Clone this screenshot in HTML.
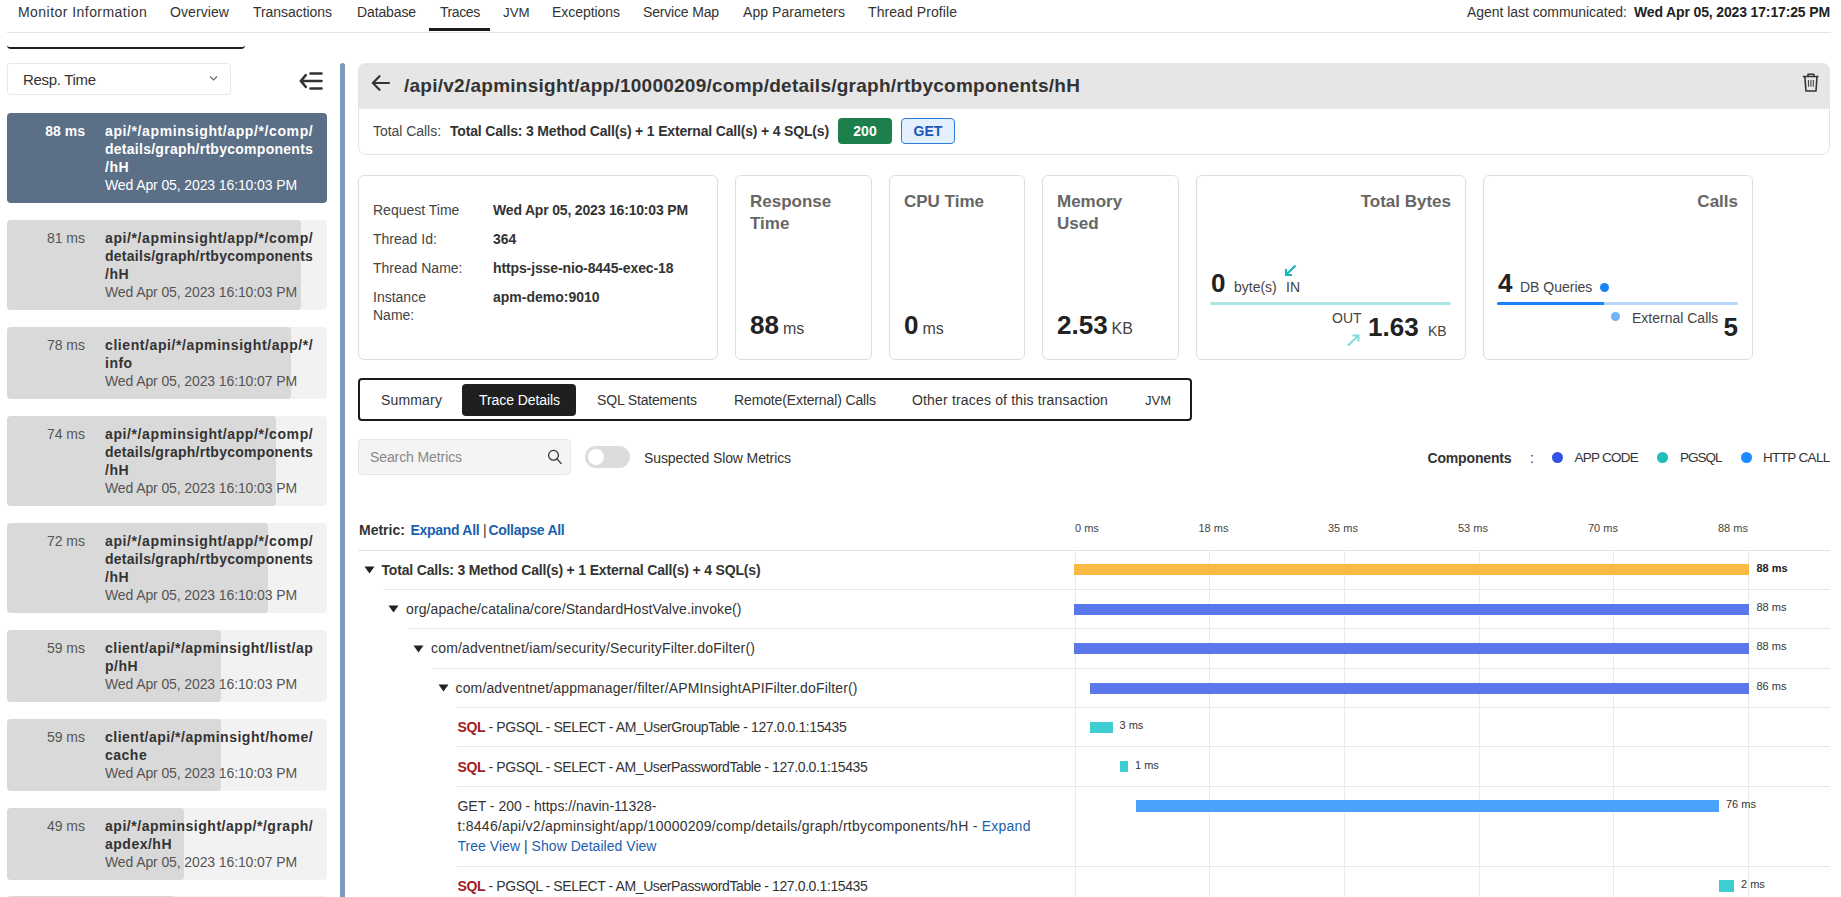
<!DOCTYPE html><html><head><meta charset="utf-8"><style>
html,body{margin:0;padding:0;width:1841px;height:897px;overflow:hidden;background:#fff;font-family:"Liberation Sans",sans-serif;position:relative}
div{box-sizing:border-box}
</style></head><body>
<div style="position:absolute;left:18px;top:3.15px;font-size:14px;line-height:18px;font-weight:400;color:#333;letter-spacing:0.454px;white-space:nowrap;">Monitor Information</div>
<div style="position:absolute;left:170px;top:3.15px;font-size:14px;line-height:18px;font-weight:400;color:#333;letter-spacing:0.085px;white-space:nowrap;">Overview</div>
<div style="position:absolute;left:253px;top:3.15px;font-size:14px;line-height:18px;font-weight:400;color:#333;letter-spacing:-0.054px;white-space:nowrap;">Transactions</div>
<div style="position:absolute;left:357px;top:3.15px;font-size:14px;line-height:18px;font-weight:400;color:#333;letter-spacing:-0.125px;white-space:nowrap;">Database</div>
<div style="position:absolute;left:440px;top:3.15px;font-size:14px;line-height:18px;font-weight:400;color:#333;letter-spacing:-0.415px;white-space:nowrap;">Traces</div>
<div style="position:absolute;left:503px;top:3.89px;font-size:13.3px;line-height:17px;font-weight:400;color:#333;letter-spacing:0.000px;white-space:nowrap;">JVM</div>
<div style="position:absolute;left:552px;top:3.15px;font-size:14px;line-height:18px;font-weight:400;color:#333;letter-spacing:-0.051px;white-space:nowrap;">Exceptions</div>
<div style="position:absolute;left:643px;top:3.15px;font-size:14px;line-height:18px;font-weight:400;color:#333;letter-spacing:-0.173px;white-space:nowrap;">Service Map</div>
<div style="position:absolute;left:743px;top:3.15px;font-size:14px;line-height:18px;font-weight:400;color:#333;letter-spacing:0.061px;white-space:nowrap;">App Parameters</div>
<div style="position:absolute;left:868px;top:3.15px;font-size:14px;line-height:18px;font-weight:400;color:#333;letter-spacing:0.079px;white-space:nowrap;">Thread Profile</div>
<div style="position:absolute;left:429px;top:28px;width:61px;height:3px;background:#1a1a1a;border-radius:0;"></div>
<div style="position:absolute;left:7px;top:32px;width:1824px;height:1px;background:#e2e2e2;border-radius:0;"></div>
<div style="position:absolute;left:1467px;top:3.15px;font-size:14px;line-height:18px;font-weight:400;color:#333;letter-spacing:-0.047px;white-space:nowrap;">Agent last communicated:</div>
<div style="position:absolute;left:1634px;top:3.15px;font-size:14px;line-height:18px;font-weight:700;color:#222;letter-spacing:-0.145px;white-space:nowrap;">Wed Apr 05, 2023 17:17:25 PM</div>
<div style="position:absolute;left:7px;top:38px;width:238px;height:11px;background:transparent;border:0 solid #1f1f1f;border-radius:0 0 4px 4px;border-bottom-width:2.5px;"></div>
<div style="position:absolute;left:7px;top:63px;width:224px;height:32px;background:#fff;border:1px solid #e9e9e9;border-radius:3px;"></div>
<div style="position:absolute;left:23px;top:69.80px;font-size:15px;line-height:20px;font-weight:400;color:#333;letter-spacing:-0.301px;white-space:nowrap;">Resp. Time</div>
<svg style="position:absolute;left:209px;top:75px" width="9" height="7" viewBox="0 0 9 7"><path d="M1 1.5 L4.5 5 L8 1.5" fill="none" stroke="#666" stroke-width="1.2"/></svg>
<svg style="position:absolute;left:297px;top:70px" width="28" height="22" viewBox="0 0 28 22"><path d="M8.8 5.2 L3.8 11 L8.8 16.8 M3.8 11 H24.5 M13.5 3.5 H24.5 M13.5 18.5 H24.5" fill="none" stroke="#333" stroke-width="2.6" stroke-linecap="round" stroke-linejoin="round"/></svg>
<div style="position:absolute;left:340px;top:63px;width:5px;height:834px;background:#7b9bb9;border-radius:3px 3px 0 0;"></div>
<div style="position:absolute;left:7px;top:113px;width:320px;height:90px;background:#5b6f87;border-radius:4px;"></div>
<div style="position:absolute;right:1756px;text-align:right;top:122.15px;font-size:14px;line-height:18px;font-weight:700;color:#fff;letter-spacing:0.000px;white-space:nowrap;">88 ms</div>
<div style="position:absolute;left:105px;top:122.15px;font-size:14px;line-height:18px;font-weight:700;color:#fff;letter-spacing:0.605px;white-space:nowrap;">api/*/apminsight/app/*/comp/</div>
<div style="position:absolute;left:105px;top:140.15px;font-size:14px;line-height:18px;font-weight:700;color:#fff;letter-spacing:0.265px;white-space:nowrap;">details/graph/rtbycomponents</div>
<div style="position:absolute;left:105px;top:158.15px;font-size:14px;line-height:18px;font-weight:700;color:#fff;letter-spacing:0.500px;white-space:nowrap;">/hH</div>
<div style="position:absolute;left:105px;top:176.15px;font-size:14px;line-height:18px;font-weight:400;color:#fff;letter-spacing:-0.113px;white-space:nowrap;">Wed Apr 05, 2023 16:10:03 PM</div>
<div style="position:absolute;left:7px;top:220px;width:320px;height:90px;background:#f2f2f2;border-radius:4px;"></div>
<div style="position:absolute;left:7px;top:220px;width:294px;height:90px;background:#d9d9d9;border-radius:4px;"></div>
<div style="position:absolute;right:1756px;text-align:right;top:229.15px;font-size:14px;line-height:18px;font-weight:400;color:#555;letter-spacing:0.000px;white-space:nowrap;">81 ms</div>
<div style="position:absolute;left:105px;top:229.15px;font-size:14px;line-height:18px;font-weight:700;color:#333;letter-spacing:0.605px;white-space:nowrap;">api/*/apminsight/app/*/comp/</div>
<div style="position:absolute;left:105px;top:247.15px;font-size:14px;line-height:18px;font-weight:700;color:#333;letter-spacing:0.265px;white-space:nowrap;">details/graph/rtbycomponents</div>
<div style="position:absolute;left:105px;top:265.15px;font-size:14px;line-height:18px;font-weight:700;color:#333;letter-spacing:0.500px;white-space:nowrap;">/hH</div>
<div style="position:absolute;left:105px;top:283.15px;font-size:14px;line-height:18px;font-weight:400;color:#555;letter-spacing:-0.113px;white-space:nowrap;">Wed Apr 05, 2023 16:10:03 PM</div>
<div style="position:absolute;left:7px;top:327px;width:320px;height:72px;background:#f2f2f2;border-radius:4px;"></div>
<div style="position:absolute;left:7px;top:327px;width:284px;height:72px;background:#d9d9d9;border-radius:4px;"></div>
<div style="position:absolute;right:1756px;text-align:right;top:336.15px;font-size:14px;line-height:18px;font-weight:400;color:#555;letter-spacing:0.000px;white-space:nowrap;">78 ms</div>
<div style="position:absolute;left:105px;top:336.15px;font-size:14px;line-height:18px;font-weight:700;color:#333;letter-spacing:0.590px;white-space:nowrap;">client/api/*/apminsight/app/*/</div>
<div style="position:absolute;left:105px;top:354.15px;font-size:14px;line-height:18px;font-weight:700;color:#333;letter-spacing:0.500px;white-space:nowrap;">info</div>
<div style="position:absolute;left:105px;top:372.15px;font-size:14px;line-height:18px;font-weight:400;color:#555;letter-spacing:-0.113px;white-space:nowrap;">Wed Apr 05, 2023 16:10:07 PM</div>
<div style="position:absolute;left:7px;top:416px;width:320px;height:90px;background:#f2f2f2;border-radius:4px;"></div>
<div style="position:absolute;left:7px;top:416px;width:269px;height:90px;background:#d9d9d9;border-radius:4px;"></div>
<div style="position:absolute;right:1756px;text-align:right;top:425.15px;font-size:14px;line-height:18px;font-weight:400;color:#555;letter-spacing:0.000px;white-space:nowrap;">74 ms</div>
<div style="position:absolute;left:105px;top:425.15px;font-size:14px;line-height:18px;font-weight:700;color:#333;letter-spacing:0.605px;white-space:nowrap;">api/*/apminsight/app/*/comp/</div>
<div style="position:absolute;left:105px;top:443.15px;font-size:14px;line-height:18px;font-weight:700;color:#333;letter-spacing:0.265px;white-space:nowrap;">details/graph/rtbycomponents</div>
<div style="position:absolute;left:105px;top:461.15px;font-size:14px;line-height:18px;font-weight:700;color:#333;letter-spacing:0.500px;white-space:nowrap;">/hH</div>
<div style="position:absolute;left:105px;top:479.15px;font-size:14px;line-height:18px;font-weight:400;color:#555;letter-spacing:-0.113px;white-space:nowrap;">Wed Apr 05, 2023 16:10:03 PM</div>
<div style="position:absolute;left:7px;top:523px;width:320px;height:90px;background:#f2f2f2;border-radius:4px;"></div>
<div style="position:absolute;left:7px;top:523px;width:261px;height:90px;background:#d9d9d9;border-radius:4px;"></div>
<div style="position:absolute;right:1756px;text-align:right;top:532.15px;font-size:14px;line-height:18px;font-weight:400;color:#555;letter-spacing:0.000px;white-space:nowrap;">72 ms</div>
<div style="position:absolute;left:105px;top:532.15px;font-size:14px;line-height:18px;font-weight:700;color:#333;letter-spacing:0.605px;white-space:nowrap;">api/*/apminsight/app/*/comp/</div>
<div style="position:absolute;left:105px;top:550.15px;font-size:14px;line-height:18px;font-weight:700;color:#333;letter-spacing:0.265px;white-space:nowrap;">details/graph/rtbycomponents</div>
<div style="position:absolute;left:105px;top:568.15px;font-size:14px;line-height:18px;font-weight:700;color:#333;letter-spacing:0.500px;white-space:nowrap;">/hH</div>
<div style="position:absolute;left:105px;top:586.15px;font-size:14px;line-height:18px;font-weight:400;color:#555;letter-spacing:-0.113px;white-space:nowrap;">Wed Apr 05, 2023 16:10:03 PM</div>
<div style="position:absolute;left:7px;top:630px;width:320px;height:72px;background:#f2f2f2;border-radius:4px;"></div>
<div style="position:absolute;left:7px;top:630px;width:214px;height:72px;background:#d9d9d9;border-radius:4px;"></div>
<div style="position:absolute;right:1756px;text-align:right;top:639.15px;font-size:14px;line-height:18px;font-weight:400;color:#555;letter-spacing:0.000px;white-space:nowrap;">59 ms</div>
<div style="position:absolute;left:105px;top:639.15px;font-size:14px;line-height:18px;font-weight:700;color:#333;letter-spacing:0.494px;white-space:nowrap;">client/api/*/apminsight/list/ap</div>
<div style="position:absolute;left:105px;top:657.15px;font-size:14px;line-height:18px;font-weight:700;color:#333;letter-spacing:0.500px;white-space:nowrap;">p/hH</div>
<div style="position:absolute;left:105px;top:675.15px;font-size:14px;line-height:18px;font-weight:400;color:#555;letter-spacing:-0.113px;white-space:nowrap;">Wed Apr 05, 2023 16:10:03 PM</div>
<div style="position:absolute;left:7px;top:719px;width:320px;height:72px;background:#f2f2f2;border-radius:4px;"></div>
<div style="position:absolute;left:7px;top:719px;width:214px;height:72px;background:#d9d9d9;border-radius:4px;"></div>
<div style="position:absolute;right:1756px;text-align:right;top:728.15px;font-size:14px;line-height:18px;font-weight:400;color:#555;letter-spacing:0.000px;white-space:nowrap;">59 ms</div>
<div style="position:absolute;left:105px;top:728.15px;font-size:14px;line-height:18px;font-weight:700;color:#333;letter-spacing:0.502px;white-space:nowrap;">client/api/*/apminsight/home/</div>
<div style="position:absolute;left:105px;top:746.15px;font-size:14px;line-height:18px;font-weight:700;color:#333;letter-spacing:0.500px;white-space:nowrap;">cache</div>
<div style="position:absolute;left:105px;top:764.15px;font-size:14px;line-height:18px;font-weight:400;color:#555;letter-spacing:-0.113px;white-space:nowrap;">Wed Apr 05, 2023 16:10:03 PM</div>
<div style="position:absolute;left:7px;top:808px;width:320px;height:72px;background:#f2f2f2;border-radius:4px;"></div>
<div style="position:absolute;left:7px;top:808px;width:177px;height:72px;background:#d9d9d9;border-radius:4px;"></div>
<div style="position:absolute;right:1756px;text-align:right;top:817.15px;font-size:14px;line-height:18px;font-weight:400;color:#555;letter-spacing:0.000px;white-space:nowrap;">49 ms</div>
<div style="position:absolute;left:105px;top:817.15px;font-size:14px;line-height:18px;font-weight:700;color:#333;letter-spacing:0.529px;white-space:nowrap;">api/*/apminsight/app/*/graph/</div>
<div style="position:absolute;left:105px;top:835.15px;font-size:14px;line-height:18px;font-weight:700;color:#333;letter-spacing:0.500px;white-space:nowrap;">apdex/hH</div>
<div style="position:absolute;left:105px;top:853.15px;font-size:14px;line-height:18px;font-weight:400;color:#555;letter-spacing:-0.113px;white-space:nowrap;">Wed Apr 05, 2023 16:10:07 PM</div>
<div style="position:absolute;left:7px;top:896px;width:320px;height:91px;background:#f2f2f2;border-radius:4px;"></div>
<div style="position:absolute;left:7px;top:896px;width:169px;height:91px;background:#d9d9d9;border-radius:4px;"></div>
<div style="position:absolute;right:1756px;text-align:right;top:905.15px;font-size:14px;line-height:18px;font-weight:400;color:#555;letter-spacing:0.000px;white-space:nowrap;">48 ms</div>
<div style="position:absolute;left:105px;top:905.15px;font-size:14px;line-height:18px;font-weight:700;color:#333;letter-spacing:0.500px;white-space:nowrap;">api/*/apminsight/app/*/comp/</div>
<div style="position:absolute;left:358px;top:63px;width:1472px;height:92px;background:#fff;border:1px solid #e3e3e3;border-radius:8px;"></div>
<div style="position:absolute;left:358px;top:63px;width:1472px;height:46px;background:#e6e6e6;border-radius:8px 8px 0 0;"></div>
<svg style="position:absolute;left:370px;top:73px" width="22" height="20" viewBox="0 0 22 20"><path d="M9.5 3.2 L2.8 10 L9.5 16.8 M2.8 10 H19" fill="none" stroke="#333" stroke-width="2.2" stroke-linecap="round" stroke-linejoin="round"/></svg>
<div style="position:absolute;left:404px;top:72.92px;font-size:19px;line-height:25px;font-weight:700;color:#333;letter-spacing:0.254px;white-space:nowrap;">/api/v2/apminsight/app/10000209/comp/details/graph/rtbycomponents/hH</div>
<svg style="position:absolute;left:1801px;top:72px" width="19" height="21" viewBox="0 0 19 21"><path d="M1.8 4.5 H17.5 M7 4.5 V2.3 H12.8 V4.5 M3.8 4.5 L5 19 H15 L16 4.5" fill="none" stroke="#333" stroke-width="1.6" stroke-linejoin="round"/><path d="M7.4 8 L7.6 14.8 M9.9 8 V14.8 M12.4 8 L12.2 14.8" fill="none" stroke="#444" stroke-width="1.1" stroke-linejoin="round"/></svg>
<div style="position:absolute;left:373px;top:122.15px;font-size:14px;line-height:18px;font-weight:400;color:#444;letter-spacing:-0.041px;white-space:nowrap;">Total Calls:</div>
<div style="position:absolute;left:450px;top:122.15px;font-size:14px;line-height:18px;font-weight:700;color:#333;letter-spacing:-0.174px;white-space:nowrap;">Total Calls: 3 Method Call(s) + 1 External Call(s) + 4 SQL(s)</div>
<div style="position:absolute;left:838px;top:118px;width:54px;height:26px;background:#1d7f4b;border-radius:4px;"></div>
<div style="position:absolute;left:715px;width:300px;text-align:center;top:122.15px;font-size:14px;line-height:18px;font-weight:700;color:#fff;letter-spacing:0.000px;white-space:nowrap;">200</div>
<div style="position:absolute;left:901px;top:118px;width:54px;height:26px;background:#e2effd;border:1px solid #2a7de1;border-radius:4px;"></div>
<div style="position:absolute;left:778px;width:300px;text-align:center;top:122.15px;font-size:14px;line-height:18px;font-weight:700;color:#1f55b8;letter-spacing:0.000px;white-space:nowrap;">GET</div>
<div style="position:absolute;left:358px;top:175px;width:360px;height:185px;background:#fff;border:1px solid #dedede;border-radius:6px;"></div>
<div style="position:absolute;left:373px;top:201.15px;font-size:14px;line-height:18px;font-weight:400;color:#444;letter-spacing:0.000px;white-space:nowrap;">Request Time</div>
<div style="position:absolute;left:373px;top:230.15px;font-size:14px;line-height:18px;font-weight:400;color:#444;letter-spacing:0.000px;white-space:nowrap;">Thread Id:</div>
<div style="position:absolute;left:373px;top:259.15px;font-size:14px;line-height:18px;font-weight:400;color:#444;letter-spacing:0.000px;white-space:nowrap;">Thread Name:</div>
<div style="position:absolute;left:373px;top:288.15px;font-size:14px;line-height:18px;font-weight:400;color:#444;letter-spacing:0.000px;white-space:nowrap;">Instance</div>
<div style="position:absolute;left:373px;top:306.15px;font-size:14px;line-height:18px;font-weight:400;color:#444;letter-spacing:0.000px;white-space:nowrap;">Name:</div>
<div style="position:absolute;left:493px;top:201.15px;font-size:14px;line-height:18px;font-weight:700;color:#333;letter-spacing:-0.182px;white-space:nowrap;">Wed Apr 05, 2023 16:10:03 PM</div>
<div style="position:absolute;left:493px;top:230.15px;font-size:14px;line-height:18px;font-weight:700;color:#333;letter-spacing:0.000px;white-space:nowrap;">364</div>
<div style="position:absolute;left:493px;top:259.15px;font-size:14px;line-height:18px;font-weight:700;color:#333;letter-spacing:-0.119px;white-space:nowrap;">https-jsse-nio-8445-exec-18</div>
<div style="position:absolute;left:493px;top:288.15px;font-size:14px;line-height:18px;font-weight:700;color:#333;letter-spacing:0.000px;white-space:nowrap;">apm-demo:9010</div>
<div style="position:absolute;left:735px;top:175px;width:137px;height:185px;background:#fff;border:1px solid #dedede;border-radius:6px;"></div>
<div style="position:absolute;left:750px;top:190.61px;font-size:17px;line-height:22px;font-weight:700;color:#666;letter-spacing:0.000px;white-space:nowrap;">Response</div>
<div style="position:absolute;left:750px;top:213.11px;font-size:17px;line-height:22px;font-weight:700;color:#666;letter-spacing:0.000px;white-space:nowrap;">Time</div>
<div style="position:absolute;left:750px;top:307.99px;font-size:26px;line-height:34px;font-weight:700;color:#222;letter-spacing:0.000px;white-space:nowrap;">88<span style="font-size:16px;font-weight:400;color:#444;margin-left:4px">ms</span></div>
<div style="position:absolute;left:889px;top:175px;width:136px;height:185px;background:#fff;border:1px solid #dedede;border-radius:6px;"></div>
<div style="position:absolute;left:904px;top:190.61px;font-size:17px;line-height:22px;font-weight:700;color:#666;letter-spacing:0.000px;white-space:nowrap;">CPU Time</div>
<div style="position:absolute;left:904px;top:307.99px;font-size:26px;line-height:34px;font-weight:700;color:#222;letter-spacing:0.000px;white-space:nowrap;">0<span style="font-size:16px;font-weight:400;color:#444;margin-left:4px">ms</span></div>
<div style="position:absolute;left:1042px;top:175px;width:137px;height:185px;background:#fff;border:1px solid #dedede;border-radius:6px;"></div>
<div style="position:absolute;left:1057px;top:190.61px;font-size:17px;line-height:22px;font-weight:700;color:#666;letter-spacing:0.000px;white-space:nowrap;">Memory</div>
<div style="position:absolute;left:1057px;top:213.11px;font-size:17px;line-height:22px;font-weight:700;color:#666;letter-spacing:0.000px;white-space:nowrap;">Used</div>
<div style="position:absolute;left:1057px;top:307.99px;font-size:26px;line-height:34px;font-weight:700;color:#222;letter-spacing:0.000px;white-space:nowrap;">2.53<span style="font-size:16px;font-weight:400;color:#444;margin-left:4px">KB</span></div>
<div style="position:absolute;left:1196px;top:175px;width:270px;height:185px;background:#fff;border:1px solid #dedede;border-radius:6px;"></div>
<div style="position:absolute;right:390px;text-align:right;top:190.61px;font-size:17px;line-height:22px;font-weight:700;color:#666;letter-spacing:0.000px;white-space:nowrap;">Total Bytes</div>
<div style="position:absolute;left:1211px;top:265.99px;font-size:26px;line-height:34px;font-weight:700;color:#222;letter-spacing:0.000px;white-space:nowrap;">0</div>
<div style="position:absolute;left:1234px;top:278.15px;font-size:14px;line-height:18px;font-weight:400;color:#444;letter-spacing:0.000px;white-space:nowrap;">byte(s)</div>
<div style="position:absolute;left:1286px;top:278.15px;font-size:14px;line-height:18px;font-weight:400;color:#444;letter-spacing:0.000px;white-space:nowrap;">IN</div>
<svg style="position:absolute;left:1283px;top:263px" width="15" height="15" viewBox="0 0 15 15"><path d="M12.5 2.5 L3 12 M3 6 V12 H9" fill="none" stroke="#1bb3b3" stroke-width="2.2"/></svg>
<div style="position:absolute;left:1210px;top:302px;width:241px;height:3px;background:#ace5e5;border-radius:2px;"></div>
<div style="position:absolute;left:1332px;top:309.15px;font-size:14px;line-height:18px;font-weight:400;color:#444;letter-spacing:0.000px;white-space:nowrap;">OUT</div>
<div style="position:absolute;left:1368px;top:310.49px;font-size:26px;line-height:34px;font-weight:700;color:#222;letter-spacing:0.000px;white-space:nowrap;">1.63</div>
<div style="position:absolute;left:1428px;top:322.15px;font-size:14px;line-height:18px;font-weight:400;color:#444;letter-spacing:0.000px;white-space:nowrap;">KB</div>
<svg style="position:absolute;left:1346px;top:333px" width="16" height="14" viewBox="0 0 16 14"><path d="M2 12.5 L12.5 2.5 M6.5 2.5 H12.5 V8.5" fill="none" stroke="#7fdcdc" stroke-width="2"/></svg>
<div style="position:absolute;left:1483px;top:175px;width:270px;height:185px;background:#fff;border:1px solid #dedede;border-radius:6px;"></div>
<div style="position:absolute;right:103px;text-align:right;top:190.61px;font-size:17px;line-height:22px;font-weight:700;color:#666;letter-spacing:0.000px;white-space:nowrap;">Calls</div>
<div style="position:absolute;left:1498px;top:265.99px;font-size:26px;line-height:34px;font-weight:700;color:#222;letter-spacing:0.000px;white-space:nowrap;">4</div>
<div style="position:absolute;left:1520px;top:278.15px;font-size:14px;line-height:18px;font-weight:400;color:#444;letter-spacing:0.000px;white-space:nowrap;">DB Queries</div>
<div style="position:absolute;left:1599.5px;top:282.5px;width:9.5px;height:9.5px;background:#1a82f7;border-radius:50%;"></div>
<div style="position:absolute;left:1497px;top:302px;width:241px;height:3px;background:#b7d7fb;border-radius:2px;"></div>
<div style="position:absolute;left:1497px;top:302px;width:107px;height:3px;background:#1a82f7;border-radius:2px 0 0 2px;"></div>
<div style="position:absolute;left:1610.5px;top:311.5px;width:9.5px;height:9.5px;background:#6cb3fa;border-radius:50%;"></div>
<div style="position:absolute;left:1632px;top:309.15px;font-size:14px;line-height:18px;font-weight:400;color:#444;letter-spacing:0.000px;white-space:nowrap;">External Calls</div>
<div style="position:absolute;right:103px;text-align:right;top:309.99px;font-size:26px;line-height:34px;font-weight:700;color:#222;letter-spacing:0.000px;white-space:nowrap;">5</div>
<div style="position:absolute;left:358px;top:378px;width:834px;height:43px;background:#fff;border:2px solid #1a1a1a;border-radius:4px;"></div>
<div style="position:absolute;left:462px;top:384px;width:114px;height:32px;background:#1f1f1f;border-radius:4px;"></div>
<div style="position:absolute;left:381px;top:391.15px;font-size:14px;line-height:18px;font-weight:400;color:#333;letter-spacing:0.168px;white-space:nowrap;">Summary</div>
<div style="position:absolute;left:479px;top:391.15px;font-size:14px;line-height:18px;font-weight:400;color:#fff;letter-spacing:-0.076px;white-space:nowrap;">Trace Details</div>
<div style="position:absolute;left:597px;top:391.15px;font-size:14px;line-height:18px;font-weight:400;color:#333;letter-spacing:-0.163px;white-space:nowrap;">SQL Statements</div>
<div style="position:absolute;left:734px;top:391.15px;font-size:14px;line-height:18px;font-weight:400;color:#333;letter-spacing:-0.126px;white-space:nowrap;">Remote(External) Calls</div>
<div style="position:absolute;left:912px;top:391.15px;font-size:14px;line-height:18px;font-weight:400;color:#333;letter-spacing:0.170px;white-space:nowrap;">Other traces of this transaction</div>
<div style="position:absolute;left:1145px;top:392.00px;font-size:13px;line-height:17px;font-weight:400;color:#333;letter-spacing:0.000px;white-space:nowrap;">JVM</div>
<div style="position:absolute;left:358px;top:439px;width:213px;height:36px;background:#f4f4f4;border:1px solid #e6e6e6;border-radius:4px;"></div>
<div style="position:absolute;left:370px;top:448.15px;font-size:14px;line-height:18px;font-weight:400;color:#888;letter-spacing:-0.101px;white-space:nowrap;">Search Metrics</div>
<svg style="position:absolute;left:546px;top:449px" width="17" height="17" viewBox="0 0 17 17"><circle cx="7.5" cy="6.3" r="4.9" fill="none" stroke="#333" stroke-width="1.3"/><path d="M11 9.9 L15 14.4" stroke="#333" stroke-width="1.4" stroke-linecap="round"/></svg>
<div style="position:absolute;left:585px;top:446px;width:45px;height:22px;background:#dcdcdc;border-radius:11px;"></div>
<div style="position:absolute;left:588px;top:449px;width:16px;height:16px;background:#fff;border-radius:50%;"></div>
<div style="position:absolute;left:644px;top:449.15px;font-size:14px;line-height:18px;font-weight:400;color:#333;letter-spacing:-0.112px;white-space:nowrap;">Suspected Slow Metrics</div>
<div style="position:absolute;left:1427.5px;top:448.65px;font-size:14px;line-height:18px;font-weight:700;color:#333;letter-spacing:-0.164px;white-space:nowrap;">Components</div>
<div style="position:absolute;left:1530px;top:448.65px;font-size:14px;line-height:18px;font-weight:400;color:#333;letter-spacing:0.000px;white-space:nowrap;">:</div>
<div style="position:absolute;left:1552px;top:452px;width:11px;height:11px;background:#3253e6;border-radius:50%;"></div>
<div style="position:absolute;left:1574.5px;top:448.82px;font-size:13.5px;line-height:18px;font-weight:400;color:#333;letter-spacing:-0.738px;white-space:nowrap;">APP CODE</div>
<div style="position:absolute;left:1657px;top:452px;width:11px;height:11px;background:#1dbfb8;border-radius:50%;"></div>
<div style="position:absolute;left:1680px;top:448.82px;font-size:13.5px;line-height:18px;font-weight:400;color:#333;letter-spacing:-1.007px;white-space:nowrap;">PGSQL</div>
<div style="position:absolute;left:1740.5px;top:452px;width:11.0px;height:11px;background:#1a8cff;border-radius:50%;"></div>
<div style="position:absolute;left:1763px;top:448.82px;font-size:13.5px;line-height:18px;font-weight:400;color:#333;letter-spacing:-0.651px;white-space:nowrap;">HTTP CALL</div>
<div style="position:absolute;left:359px;top:521.15px;font-size:14px;line-height:18px;font-weight:700;color:#333;letter-spacing:0.000px;white-space:nowrap;">Metric: </div>
<div style="position:absolute;left:410.5px;top:521.15px;font-size:14px;line-height:18px;font-weight:700;color:#1b5fae;letter-spacing:-0.298px;white-space:nowrap;">Expand All</div>
<div style="position:absolute;left:483px;top:521.15px;font-size:14px;line-height:18px;font-weight:400;color:#333;letter-spacing:0.000px;white-space:nowrap;">|</div>
<div style="position:absolute;left:488.5px;top:521.15px;font-size:14px;line-height:18px;font-weight:700;color:#1b5fae;letter-spacing:-0.315px;white-space:nowrap;">Collapse All</div>
<div style="position:absolute;left:1075px;top:521.19px;font-size:11px;line-height:14px;font-weight:400;color:#444;letter-spacing:0.000px;white-space:nowrap;">0 ms</div>
<div style="position:absolute;left:1198.5px;top:521.19px;font-size:11px;line-height:14px;font-weight:400;color:#444;letter-spacing:0.000px;white-space:nowrap;">18 ms</div>
<div style="position:absolute;left:1328px;top:521.19px;font-size:11px;line-height:14px;font-weight:400;color:#444;letter-spacing:0.000px;white-space:nowrap;">35 ms</div>
<div style="position:absolute;left:1458px;top:521.19px;font-size:11px;line-height:14px;font-weight:400;color:#444;letter-spacing:0.000px;white-space:nowrap;">53 ms</div>
<div style="position:absolute;left:1588px;top:521.19px;font-size:11px;line-height:14px;font-weight:400;color:#444;letter-spacing:0.000px;white-space:nowrap;">70 ms</div>
<div style="position:absolute;left:1718px;top:521.19px;font-size:11px;line-height:14px;font-weight:400;color:#444;letter-spacing:0.000px;white-space:nowrap;">88 ms</div>
<div style="position:absolute;left:1075px;top:551px;width:1px;height:346px;background:#ebebeb;border-radius:0;"></div>
<div style="position:absolute;left:1209px;top:551px;width:1px;height:346px;background:#ebebeb;border-radius:0;"></div>
<div style="position:absolute;left:1344px;top:551px;width:1px;height:346px;background:#ebebeb;border-radius:0;"></div>
<div style="position:absolute;left:1479px;top:551px;width:1px;height:346px;background:#ebebeb;border-radius:0;"></div>
<div style="position:absolute;left:1613px;top:551px;width:1px;height:346px;background:#ebebeb;border-radius:0;"></div>
<div style="position:absolute;left:1748px;top:551px;width:1px;height:346px;background:#ebebeb;border-radius:0;"></div>
<div style="position:absolute;left:358px;top:550px;width:1472px;height:1px;background:#e3e3e3;border-radius:0;"></div>
<div style="position:absolute;left:383px;top:589px;width:1447px;height:1px;background:#e6e6e6;border-radius:0;"></div>
<div style="position:absolute;left:408px;top:628px;width:1422px;height:1px;background:#e6e6e6;border-radius:0;"></div>
<div style="position:absolute;left:433px;top:668px;width:1397px;height:1px;background:#e6e6e6;border-radius:0;"></div>
<div style="position:absolute;left:457px;top:707px;width:1373px;height:1px;background:#e6e6e6;border-radius:0;"></div>
<div style="position:absolute;left:457px;top:746px;width:1373px;height:1px;background:#e6e6e6;border-radius:0;"></div>
<div style="position:absolute;left:457px;top:786px;width:1373px;height:1px;background:#e6e6e6;border-radius:0;"></div>
<div style="position:absolute;left:457px;top:866px;width:1373px;height:1px;background:#e6e6e6;border-radius:0;"></div>
<svg style="position:absolute;left:363.5px;top:566px" width="11" height="8" viewBox="0 0 11 8"><path d="M0.5 0.5 H10.5 L5.5 7.5 Z" fill="#222"/></svg>
<div style="position:absolute;left:381.5px;top:561.15px;font-size:14px;line-height:18px;font-weight:700;color:#333;letter-spacing:-0.174px;white-space:nowrap;">Total Calls: 3 Method Call(s) + 1 External Call(s) + 4 SQL(s)</div>
<svg style="position:absolute;left:388px;top:605px" width="11" height="8" viewBox="0 0 11 8"><path d="M0.5 0.5 H10.5 L5.5 7.5 Z" fill="#222"/></svg>
<div style="position:absolute;left:406px;top:599.65px;font-size:14px;line-height:18px;font-weight:400;color:#333;letter-spacing:0.099px;white-space:nowrap;">org/apache/catalina/core/StandardHostValve.invoke()</div>
<svg style="position:absolute;left:412.5px;top:644.5px" width="11" height="8" viewBox="0 0 11 8"><path d="M0.5 0.5 H10.5 L5.5 7.5 Z" fill="#222"/></svg>
<div style="position:absolute;left:431px;top:639.15px;font-size:14px;line-height:18px;font-weight:400;color:#333;letter-spacing:0.173px;white-space:nowrap;">com/adventnet/iam/security/SecurityFilter.doFilter()</div>
<svg style="position:absolute;left:437.5px;top:684px" width="11" height="8" viewBox="0 0 11 8"><path d="M0.5 0.5 H10.5 L5.5 7.5 Z" fill="#222"/></svg>
<div style="position:absolute;left:455.5px;top:679.15px;font-size:14px;line-height:18px;font-weight:400;color:#333;letter-spacing:0.147px;white-space:nowrap;">com/adventnet/appmanager/filter/APMInsightAPIFilter.doFilter()</div>
<div style="position:absolute;left:457.5px;top:717.65px;font-size:14px;line-height:18px;font-weight:400;color:#333;letter-spacing:-0.394px;white-space:nowrap;"><b style="color:#a01c22">SQL</b> - PGSQL - SELECT - AM_UserGroupTable - 127.0.0.1:15435</div>
<div style="position:absolute;left:457.5px;top:757.65px;font-size:14px;line-height:18px;font-weight:400;color:#333;letter-spacing:-0.400px;white-space:nowrap;"><b style="color:#a01c22">SQL</b> - PGSQL - SELECT - AM_UserPasswordTable - 127.0.0.1:15435</div>
<div style="position:absolute;left:457.5px;top:797.15px;font-size:14px;line-height:18px;font-weight:400;color:#333;letter-spacing:-0.015px;white-space:nowrap;">GET - 200 - https://navin-11328-</div>
<div style="position:absolute;left:457.5px;top:817.15px;font-size:14px;line-height:18px;font-weight:400;color:#333;letter-spacing:0.248px;white-space:nowrap;">t:8446/api/v2/apminsight/app/10000209/comp/details/graph/rtbycomponents/hH - <span style="color:#1b5fae">Expand</span></div>
<div style="position:absolute;left:457.5px;top:837.15px;font-size:14px;line-height:18px;font-weight:400;color:#333;letter-spacing:0.036px;white-space:nowrap;"><span style="color:#1b5fae">Tree View</span> | <span style="color:#1b5fae">Show Detailed View</span></div>
<div style="position:absolute;left:457.5px;top:877.15px;font-size:14px;line-height:18px;font-weight:400;color:#333;letter-spacing:-0.400px;white-space:nowrap;"><b style="color:#a01c22">SQL</b> - PGSQL - SELECT - AM_UserPasswordTable - 127.0.0.1:15435</div>
<div style="position:absolute;left:1074px;top:564px;width:675px;height:11px;background:#f9b942;border-radius:0;"></div>
<div style="position:absolute;left:1756.5px;top:561.19px;font-size:11px;line-height:14px;font-weight:700;color:#222;letter-spacing:0.000px;white-space:nowrap;">88 ms</div>
<div style="position:absolute;left:1074px;top:603.5px;width:675px;height:11.0px;background:#5a78eb;border-radius:0;"></div>
<div style="position:absolute;left:1756.5px;top:599.89px;font-size:11px;line-height:14px;font-weight:400;color:#333;letter-spacing:0.000px;white-space:nowrap;">88 ms</div>
<div style="position:absolute;left:1074px;top:643px;width:675px;height:11px;background:#5a78eb;border-radius:0;"></div>
<div style="position:absolute;left:1756.5px;top:639.39px;font-size:11px;line-height:14px;font-weight:400;color:#333;letter-spacing:0.000px;white-space:nowrap;">88 ms</div>
<div style="position:absolute;left:1090px;top:682.5px;width:659px;height:11.0px;background:#5a78eb;border-radius:0;"></div>
<div style="position:absolute;left:1756.5px;top:678.89px;font-size:11px;line-height:14px;font-weight:400;color:#333;letter-spacing:0.000px;white-space:nowrap;">86 ms</div>
<div style="position:absolute;left:1090px;top:721.5px;width:23px;height:11.0px;background:#3ecdd0;border-radius:0;"></div>
<div style="position:absolute;left:1119.5px;top:717.79px;font-size:11px;line-height:14px;font-weight:400;color:#333;letter-spacing:0.000px;white-space:nowrap;">3 ms</div>
<div style="position:absolute;left:1119.5px;top:761px;width:8.5px;height:11px;background:#3ecdd0;border-radius:0;"></div>
<div style="position:absolute;left:1135px;top:758.19px;font-size:11px;line-height:14px;font-weight:400;color:#333;letter-spacing:0.000px;white-space:nowrap;">1 ms</div>
<div style="position:absolute;left:1135.5px;top:800px;width:583.5px;height:11.5px;background:#4aa3fa;border-radius:0;"></div>
<div style="position:absolute;left:1726px;top:797.19px;font-size:11px;line-height:14px;font-weight:400;color:#333;letter-spacing:0.000px;white-space:nowrap;">76 ms</div>
<div style="position:absolute;left:1719px;top:880px;width:15px;height:12px;background:#3ecdd0;border-radius:0;"></div>
<div style="position:absolute;left:1741px;top:876.69px;font-size:11px;line-height:14px;font-weight:400;color:#333;letter-spacing:0.000px;white-space:nowrap;">2 ms</div>
</body></html>
